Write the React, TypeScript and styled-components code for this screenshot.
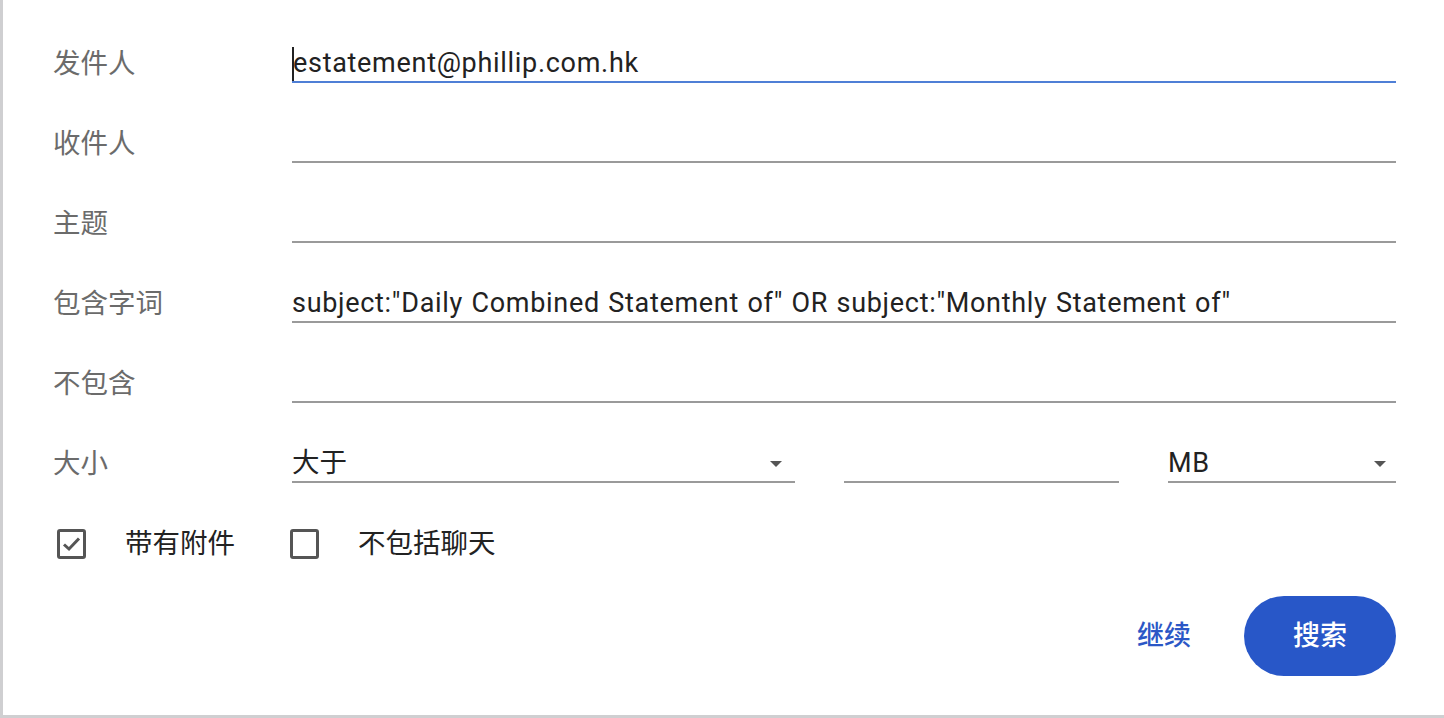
import React from "react";
import styled, { createGlobalStyle } from "styled-components";

const Global = createGlobalStyle`
  html, body { margin: 0; padding: 0; background: #fff; }
  body { font-family: Roboto, "Noto Sans CJK SC", sans-serif; }
`;

const Panel = styled.div`
  box-sizing: border-box;
  width: 1444px;
  height: 718px;
  border-left: 3px solid #cfcfd1;
  border-bottom: 3px solid #cfcfd1;
  padding: 24px 48px 0 50px;
  display: flex;
  flex-direction: column;
`;

const Row = styled.div`
  height: 80px;
  display: flex;
  align-items: center;
`;

const Label = styled.div`
  width: 239px;
  flex: none;
  font-size: 27.5px;
  line-height: 36px;
  padding-bottom: 6px;
  color: #6b6b6b;
  font-family: "Noto Sans CJK SC", sans-serif;
`;

const Field = styled.div<{ $focused?: boolean }>`
  position: relative;
  box-sizing: content-box;
  flex: 1;
  height: 36px;
  line-height: 36px;
  border-bottom: 2px solid ${(p) => (p.$focused ? "#4f7fd6" : "#9a9a9a")};
  font-size: 27px;
  letter-spacing: 0.7px;
  word-spacing: 1px;
  color: #222;
  font-family: Roboto, "Noto Sans CJK SC", sans-serif;
  white-space: nowrap;
  display: flex;
  align-items: center;
`;

const Cjk = styled.span`
  font-size: 27.5px;
  letter-spacing: 0;
  margin-top: -1px;
`;

const Caret = styled.span`
  display: inline-block;
  width: 2px;
  height: 34px;
  background: #222;
  margin-right: -1px;
  margin-top: 2px;
`;

const SizeGrid = styled.div`
  flex: 1;
  display: grid;
  grid-template-columns: 503px 275px 1fr;
  column-gap: 49px;
`;

const Arrow = styled.span<{ $right: number }>`
  position: absolute;
  right: ${(p) => p.$right}px;
  top: 16px;
  width: 0;
  height: 0;
  border-left: 6px solid transparent;
  border-right: 6px solid transparent;
  border-top: 6px solid #555;
`;

const CheckRow = styled.div`
  height: 80px;
  display: flex;
  align-items: center;
  padding-left: 4px;
`;

const CheckItem = styled.div<{ $gap: number }>`
  display: flex;
  align-items: center;
  margin-right: ${(p) => p.$gap}px;
`;

const Box = styled.span`
  box-sizing: border-box;
  width: 29px;
  height: 30px;
  border: 3px solid #555;
  border-radius: 3px;
  display: flex;
  align-items: center;
  justify-content: center;
  margin-right: 39px;
`;

const CheckText = styled.span`
  font-size: 27.5px;
  line-height: 36px;
  padding-bottom: 6px;
  color: #222;
  font-family: "Noto Sans CJK SC", sans-serif;
`;

const Actions = styled.div`
  margin-top: 12px;
  height: 80px;
  display: flex;
  justify-content: flex-end;
  align-items: center;
  gap: 53px;
`;

const TextButton = styled.button`
  border: none;
  background: none;
  padding: 0 0 6px;
  font-size: 27px;
  font-weight: 500;
  color: #2b57c6;
  font-family: "Noto Sans CJK SC", sans-serif;
`;

const PrimaryButton = styled.button`
  border: none;
  width: 152px;
  height: 80px;
  padding: 0 0 6px;
  border-radius: 40px;
  background: #2857c8;
  color: #fff;
  font-size: 27px;
  font-weight: 500;
  font-family: "Noto Sans CJK SC", sans-serif;
`;

export default function App() {
  return (
    <>
      <Global />
      <Panel>
        <Row>
          <Label>发件人</Label>
          <Field $focused>
            <Caret />
            estatement@phillip.com.hk
          </Field>
        </Row>
        <Row>
          <Label>收件人</Label>
          <Field />
        </Row>
        <Row>
          <Label>主题</Label>
          <Field />
        </Row>
        <Row>
          <Label>包含字词</Label>
          <Field>subject:"Daily Combined Statement of" OR subject:"Monthly Statement of"</Field>
        </Row>
        <Row>
          <Label>不包含</Label>
          <Field />
        </Row>
        <Row>
          <Label>大小</Label>
          <SizeGrid>
            <Field>
              <Cjk>大于</Cjk>
              <Arrow $right={13} />
            </Field>
            <Field />
            <Field>
              MB
              <Arrow $right={10} />
            </Field>
          </SizeGrid>
        </Row>
        <CheckRow>
          <CheckItem $gap={55}>
            <Box>
              <svg width="19" height="16" viewBox="0 0 19 16">
                <path d="M2 8.5 L7 13 L17 2.5" fill="none" stroke="#555" strokeWidth="3" />
              </svg>
            </Box>
            <CheckText>带有附件</CheckText>
          </CheckItem>
          <CheckItem $gap={0}>
            <Box />
            <CheckText>不包括聊天</CheckText>
          </CheckItem>
        </CheckRow>
        <Actions>
          <TextButton>继续</TextButton>
          <PrimaryButton>搜索</PrimaryButton>
        </Actions>
      </Panel>
    </>
  );
}
